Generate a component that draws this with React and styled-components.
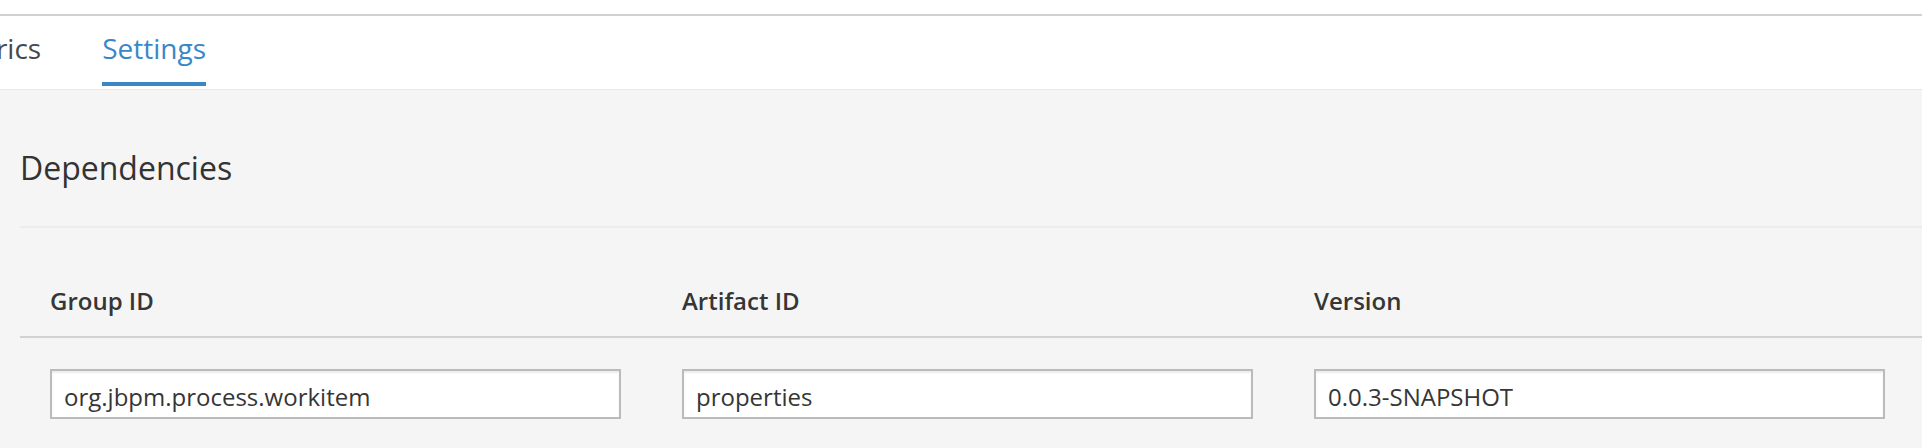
import React from "react";
import styled, { createGlobalStyle } from "styled-components";

const GlobalStyle = createGlobalStyle`
  html, body {
    margin: 0;
    padding: 0;
    height: 100%;
    background: #ffffff;
    font-family: "Open Sans", "Liberation Sans", sans-serif;
    overflow: hidden;
  }
  #root {
    height: 100%;
  }
`;

const Page = styled.div`
  display: flex;
  flex-direction: column;
  height: 100%;
  padding-top: 14px;
  box-sizing: border-box;
`;

const TabBar = styled.div`
  border-top: 2px solid #d1d1d1;
  border-bottom: 1px solid #e8e8e8;
  padding: 12px 0 3px;
  background: #fff;
  overflow: hidden;
`;

const TabList = styled.div`
  display: flex;
  gap: 61px;
  margin-left: -55px;
`;

const Tab = styled.div`
  font-size: 28px;
  line-height: 40px;
  padding-bottom: 14px;
  white-space: nowrap;
  color: ${(p) => (p.$active ? "#3a87c8" : "#47494c")};
  border-bottom: 4px solid ${(p) => (p.$active ? "#3a87c8" : "transparent")};
`;

const Content = styled.div`
  flex: 1;
  background: #f5f5f5;
  padding: 56px 0 0 20px;
`;

const Heading = styled.h2`
  margin: 0;
  font-size: 32px;
  line-height: 44px;
  font-weight: 400;
  color: #333333;
  padding-bottom: 36px;
  border-bottom: 2px solid #ececec;
`;

const Table = styled.div`
  display: flex;
  flex-direction: column;
`;

const Row = styled.div`
  display: grid;
  grid-template-columns: repeat(3, 632px);
  border-bottom: ${(p) => (p.$head ? "2px solid #d1d1d1" : "none")};
  padding: ${(p) => (p.$head ? "57px 0 19px" : "31px 0 0")};
`;

const HeadCell = styled.div`
  padding: 0 31px 0 30px;
  font-size: 24px;
  line-height: 32px;
  font-weight: 600;
  color: #363636;
`;

const Cell = styled.div`
  padding: 0 31px 0 30px;
`;

const TextInput = styled.input`
  display: block;
  width: 100%;
  height: 50px;
  box-sizing: border-box;
  border: 2px solid #bbbbbb;
  border-radius: 0;
  background: #ffffff;
  box-shadow: inset 0 2px 2px rgba(3, 3, 3, 0.075);
  padding: 4px 12px 0;
  font-family: "Open Sans", "Liberation Sans", sans-serif;
  font-size: 24px;
  color: #363636;
  outline: none;
`;

const columns = [
  { label: "Group ID", value: "org.jbpm.process.workitem" },
  { label: "Artifact ID", value: "properties" },
  { label: "Version", value: "0.0.3-SNAPSHOT" },
];

export default function App() {
  return (
    <Page>
      <GlobalStyle />
      <TabBar>
        <TabList>
          <Tab>Metrics</Tab>
          <Tab $active>Settings</Tab>
        </TabList>
      </TabBar>
      <Content>
        <Heading>Dependencies</Heading>
        <Table>
          <Row $head>
            {columns.map((c) => (
              <HeadCell key={c.label}>{c.label}</HeadCell>
            ))}
          </Row>
          <Row>
            {columns.map((c) => (
              <Cell key={c.label}>
                <TextInput defaultValue={c.value} readOnly />
              </Cell>
            ))}
          </Row>
        </Table>
      </Content>
    </Page>
  );
}
